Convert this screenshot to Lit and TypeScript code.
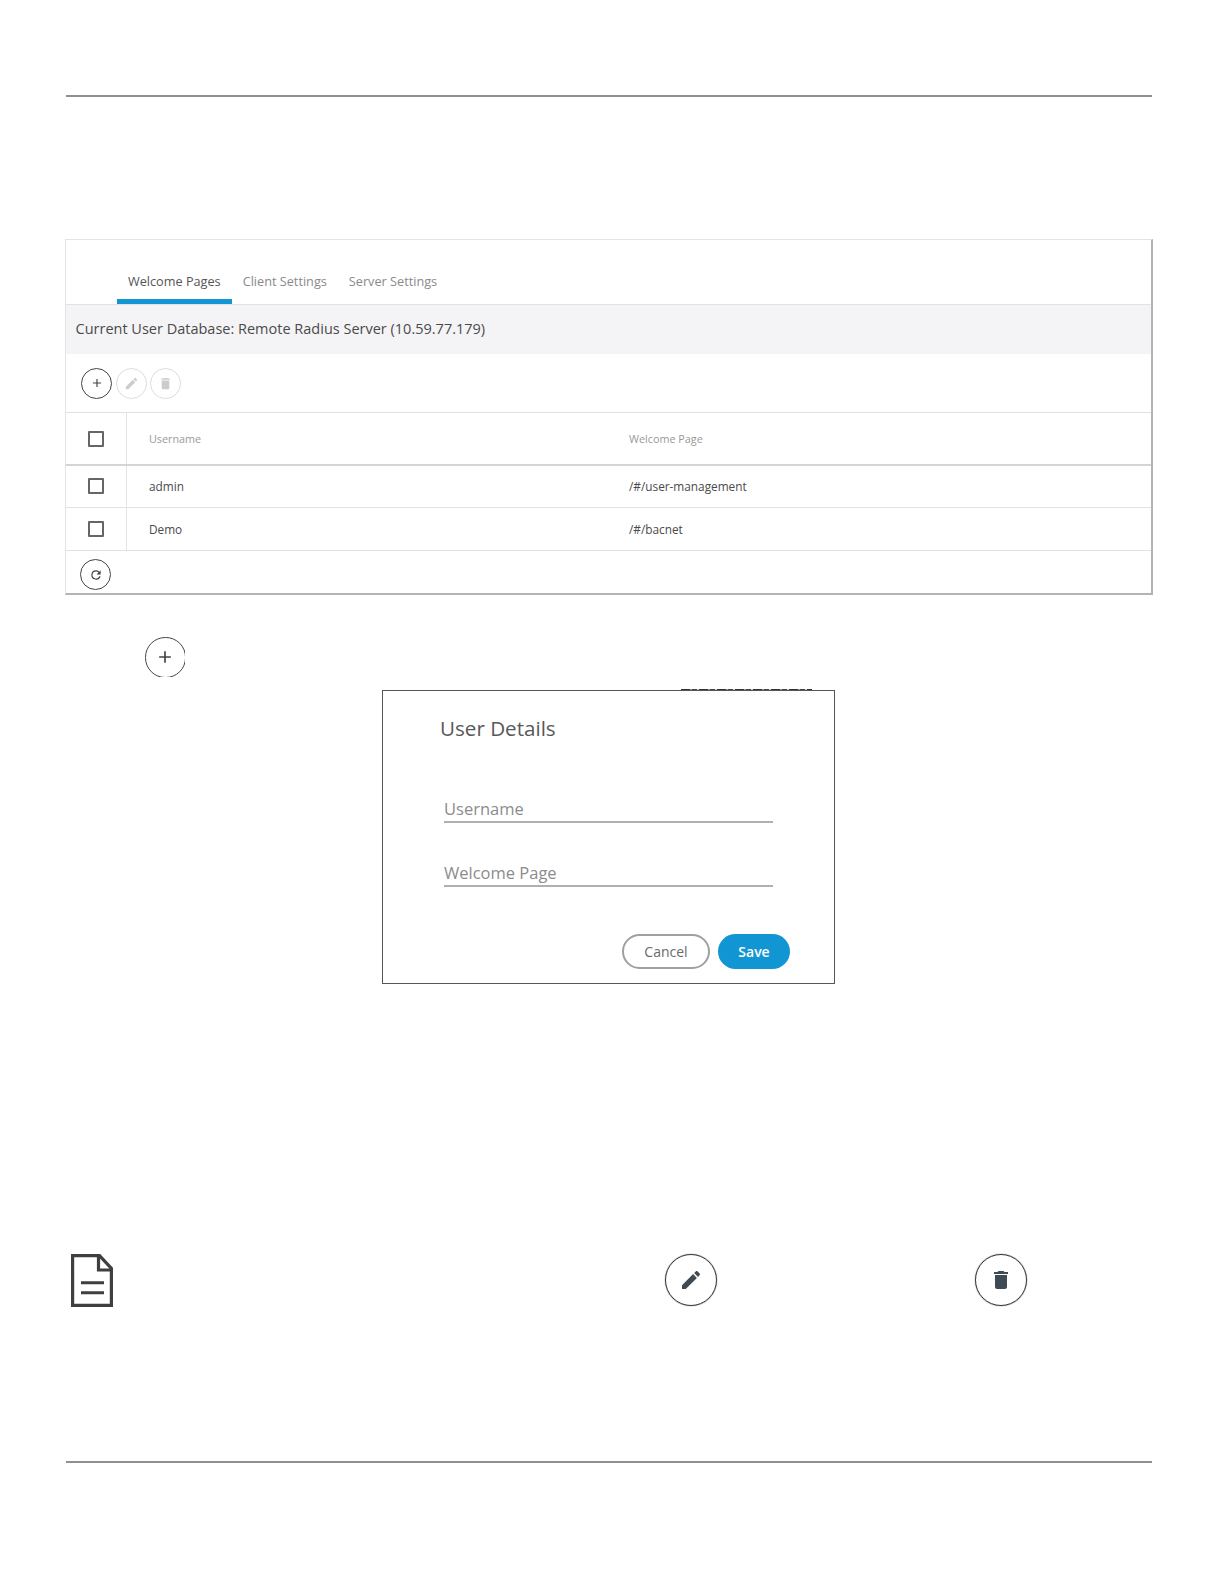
import { LitElement, html, css, svg } from "lit";
import { customElement } from "lit/decorators.js";

const pencil = svg`<path d="M3 17.2V21h3.8L17.9 9.9l-3.8-3.8L3 17.2zM20.7 7c.4-.4.4-1 0-1.4l-2.3-2.3c-.4-.4-1-.4-1.4 0l-1.8 1.8 3.8 3.8L20.7 7z"/>`;
const trash = svg`<path d="M6 19c0 1.1.9 2 2 2h8c1.1 0 2-.9 2-2V7H6v12zM19 4h-3.5l-1-1h-5l-1 1H5v2h14V4z"/>`;
const plus = svg`<path d="M19 13h-6v6h-2v-6H5v-2h6V5h2v6h6v2z"/>`;
const refresh = svg`<path d="M17.65 6.35A7.96 7.96 0 0 0 12 4a8 8 0 1 0 7.75 10h-2.08A6 6 0 1 1 12 6c1.66 0 3.14.69 4.22 1.78L13 11h7V4l-2.35 2.35z"/>`;

@customElement("app-root")
export class AppRoot extends LitElement {
  static styles = css`
    :host { display: block; width: 1224px; height: 1584px; box-sizing: border-box; padding: 95px 72px 0 66px; background: #fff; font-family: "Open Sans", sans-serif; color: #444; }
    .rule { height: 2px; background: #8f8f8f; }
    .panel { margin: 142px -1px 0 -1px; height: 356px; box-sizing: border-box; border: 1px solid #e4e4e4; border-right: 2px solid #b4b4b4; border-bottom: 2px solid #b4b4b4; display: flex; flex-direction: column; }
    .tabs { height: 65px; box-sizing: border-box; border-bottom: 1px solid #e2e2e2; display: flex; padding-left: 51px; align-items: flex-end; flex: none; }
    .tab { height: 41px; padding: 0 11px; font-size: 12.7px; line-height: 36px; color: #8a8a8a; box-sizing: border-box; }
    .tab.on { color: #555; border-bottom: 5px solid #1296d3; }
    .info { height: 49px; flex: none; background: #f4f4f6; font-size: 14.5px; line-height: 48px; padding-left: 9.5px; color: #4a4a4a; box-sizing: border-box; }
    .tools { height: 59px; flex: none; display: flex; align-items: center; gap: 3.5px; padding-left: 15px; box-sizing: border-box; border-bottom: 1px solid #e0e0e0; }
    .cbtn { width: 31px; height: 31px; border-radius: 50%; border: 1px solid #444; box-sizing: border-box; display: flex; align-items: center; justify-content: center; flex: none; background: #fff; }
    .cbtn svg { fill: #444; }
    .cbtn.off { border-color: #ddd; }
    .cbtn.off svg { fill: #ccc; }
    .row { display: grid; grid-template-columns: 61px 479px 1fr; flex: none; box-sizing: border-box; border-bottom: 1px solid #e2e2e2; font-size: 11.8px; color: #4a4a4a; }
    .row.head { height: 53px; border-bottom: 2px solid #d4d4d4; color: #999; font-size: 10.8px; }
    .row.r1 { height: 42px; padding-bottom: 1px; }
    .row.r2 { height: 43px; }
    .chk { display: flex; align-items: center; justify-content: center; }
    .row .chk { box-shadow: 1px 0 0 #e4e4e4; margin-right: 1px; }
    .box { width: 16px; height: 16px; border: 2px solid #666; border-radius: 1px; box-sizing: border-box; }
    .cell { display: flex; align-items: center; padding-left: 22px; }
    .cell.w { padding-left: 23px; }
    .foot { flex: 1; display: flex; align-items: center; padding: 5px 0 0 14px; }
    .addwrap { margin: 42px 0 0 79px; width: 40px; height: 40px; overflow: hidden; }
    .big { width: 40.5px; height: 40.5px; }
    .dialog { position: relative; margin: 13px 0 0 316px; width: 453px; height: 294px; box-sizing: border-box; border: 1px solid #555; display: flex; flex-direction: column; padding: 0 44px 0 61px; }
    .dialog::after { content: ""; position: absolute; left: 298px; top: -2px; width: 131px; height: 1px; background: repeating-linear-gradient(90deg, #333 0 9px, #999 9px 11px, #444 11px 16px, #ccc 16px 18px); }
    .title { font-size: 20.6px; line-height: 28px; color: #585858; margin: 23px 0 0 -4px; }
    .field { width: 329px; box-sizing: border-box; border-bottom: 2px solid #b0b0b0; font-size: 16.5px; color: #8c8c8c; line-height: 23px; height: 26px; }
    .field.a { margin-top: 55px; }
    .field.b { margin-top: 38px; }
    .btns { display: flex; justify-content: flex-end; gap: 8px; margin-top: 47px; }
    .btn { height: 35px; border-radius: 18px; box-sizing: border-box; font-size: 14px; display: flex; align-items: center; justify-content: center; }
    .cancel { width: 88px; border: 2px solid #a0a0a0; color: #6a6a6a; }
    .save { width: 72px; background: #1296d3; color: #fff; font-weight: 600; }
    .legend { margin-top: 270px; height: 52px; display: flex; align-items: center; }
    .doc { margin-left: 5px; flex: none; }
    .lbtn { width: 52px; height: 52px; border-radius: 50%; border: 1px solid #333; box-shadow: 0 0 1px #333; box-sizing: border-box; display: flex; align-items: center; justify-content: center; flex: none; }
    .lbtn svg { fill: #3f4a52; }
    .l1 { margin-left: 552px; }
    .l2 { margin-left: 258px; }
    .rule.bottom { margin-top: 155px; }
  `;

  private ic(p: unknown, s: number) {
    return html`<svg width=${s} height=${s} viewBox="0 0 24 24">${p}</svg>`;
  }

  render() {
    return html`
      <div class="rule"></div>
      <div class="panel">
        <div class="tabs">
          <div class="tab on">Welcome Pages</div>
          <div class="tab">Client Settings</div>
          <div class="tab">Server Settings</div>
        </div>
        <div class="info">Current User Database: Remote Radius Server (10.59.77.179)</div>
        <div class="tools">
          <div class="cbtn">${this.ic(plus, 14)}</div>
          <div class="cbtn off">${this.ic(pencil, 15)}</div>
          <div class="cbtn off">${this.ic(trash, 15)}</div>
        </div>
        <div class="row head">
          <div class="chk"><div class="box"></div></div>
          <div class="cell">Username</div>
          <div class="cell w">Welcome Page</div>
        </div>
        <div class="row r1">
          <div class="chk"><div class="box"></div></div>
          <div class="cell">admin</div>
          <div class="cell w">/#/user-management</div>
        </div>
        <div class="row r2">
          <div class="chk"><div class="box"></div></div>
          <div class="cell">Demo</div>
          <div class="cell w">/#/bacnet</div>
        </div>
        <div class="foot"><div class="cbtn">${this.ic(refresh, 14)}</div></div>
      </div>
      <div class="addwrap"><div class="cbtn big">${this.ic(plus, 20)}</div></div>
      <div class="dialog">
        <div class="title">User Details</div>
        <div class="field a">Username</div>
        <div class="field b">Welcome Page</div>
        <div class="btns">
          <div class="btn cancel">Cancel</div>
          <div class="btn save">Save</div>
        </div>
      </div>
      <div class="legend">
        <svg class="doc" width="42" height="53" viewBox="0 0 42 53" fill="none" stroke="#3f3f3f" stroke-width="3.2">
          <path d="M1.6 1.6H28.5L40.4 14.5V51.4H1.6z"/>
          <path d="M27.5 1.6V16H40.4"/>
          <path d="M10 28.7H33M10 38.7H33" stroke-width="3"/>
        </svg>
        <div class="lbtn l1">${this.ic(pencil, 24)}</div>
        <div class="lbtn l2">${this.ic(trash, 24)}</div>
      </div>
      <div class="rule bottom"></div>
    `;
  }
}
